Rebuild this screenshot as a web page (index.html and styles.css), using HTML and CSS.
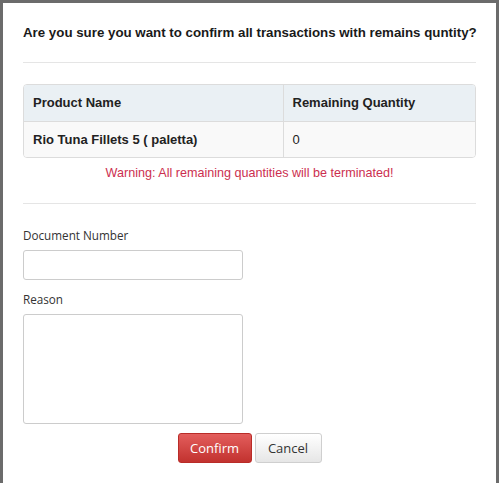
FILE: index.html
```html
<!DOCTYPE html>
<html>
<head>
<meta charset="utf-8">
<link rel="stylesheet" href="styles.css">
</head>
<body>
<div class="backdrop">
  <div class="modal">
    <div class="modal-header">
      <h4 class="title">Are you sure you want to confirm all transactions with remains quntity?</h4>
    </div>
    <div class="modal-body">
      <div class="table-wrap">
        <table class="tbl">
          <thead>
            <tr><th class="c1">Product Name</th><th>Remaining Quantity</th></tr>
          </thead>
          <tbody>
            <tr><td class="c1 strong">Rio Tuna Fillets 5 ( paletta)</td><td>0</td></tr>
          </tbody>
        </table>
      </div>
      <p class="warning">Warning: All remaining quantities will be terminated!</p>
    </div>
    <div class="modal-form">
      <label class="lbl">Document Number</label>
      <input class="field" type="text">
      <label class="lbl">Reason</label>
      <textarea class="field area"></textarea>
      <div class="actions">
        <button class="btn btn-danger">Confirm</button>
        <button class="btn btn-default">Cancel</button>
      </div>
    </div>
  </div>
</div>
</body>
</html>
```
FILE: styles.css
```css
html, body {
  margin: 0;
  padding: 0;
  height: 100%;
}
body {
  background: #6b6b6b;
  font-family: "Liberation Sans", Arial, sans-serif;
  color: #222;
}
.backdrop {
  padding: 3px 3px 0 3px;
  height: 100%;
  box-sizing: border-box;
}
.modal {
  background: #fff;
  height: 100%;
  box-sizing: border-box;
}
.modal-header {
  margin: 0 20px;
  padding: 21px 0 20px;
  border-bottom: 1px solid #e5e5e5;
}
.title {
  margin: 0;
  font-size: 13.3px;
  font-weight: bold;
  color: #1a1a1a;
  line-height: 18px;
  white-space: nowrap;
}
.modal-body {
  margin: 0 20px;
  padding: 21px 0 22px;
  border-bottom: 1px solid #e5e5e5;
}
.table-wrap {
  border: 1px solid #dcdcdc;
  border-radius: 4px;
  overflow: hidden;
}
.tbl {
  width: 100%;
  border-collapse: collapse;
  font-size: 13px;
}
.tbl th, .tbl td {
  text-align: left;
  padding: 0 9px;
  height: 36px;
  box-sizing: border-box;
}
.tbl th {
  background: #eaf0f4;
  font-weight: bold;
  color: #222;
  border-bottom: 1px solid #dcdcdc;
}
.tbl td {
  background: #f9f9f9;
  color: #222;
}
.tbl .c1 {
  width: 259px;
  border-right: 1px solid #dcdcdc;
}
.tbl .strong {
  font-weight: bold;
}
.warning {
  margin: 7px 0 0;
  text-align: center;
  color: #cc2f4f;
  font-size: 12.6px;
  line-height: 16px;
}
.modal-form {
  margin: 0 20px;
  padding: 22px 0 0;
  display: flex;
  flex-direction: column;
  align-items: flex-start;
}
.lbl {
  font-family: "Open Sans", sans-serif;
  font-size: 11.7px;
  color: #333;
  line-height: 18px;
  margin-bottom: 6px;
}
.field {
  width: 220px;
  height: 30px;
  border: 1px solid #cccccc;
  border-radius: 3px;
  box-sizing: border-box;
  margin: 0 0 10px;
  font: inherit;
  background: #fff;
}
.area {
  height: 110px;
  resize: none;
  margin-bottom: 9px;
}
.actions {
  align-self: stretch;
  display: flex;
  justify-content: center;
  gap: 3px;
}
.btn {
  height: 30px;
  border-radius: 3px;
  font-family: "Open Sans", sans-serif;
  font-size: 13px;
  padding: 0;
  cursor: pointer;
}
.btn-danger {
  width: 74px;
  color: #fff;
  background: linear-gradient(#e35e5c, #c2322f);
  border: 1px solid #b92c28;
}
.btn-default {
  width: 67px;
  color: #333;
  background: linear-gradient(#ffffff, #e6e6e6);
  border: 1px solid #cfcfcf;
}
```
